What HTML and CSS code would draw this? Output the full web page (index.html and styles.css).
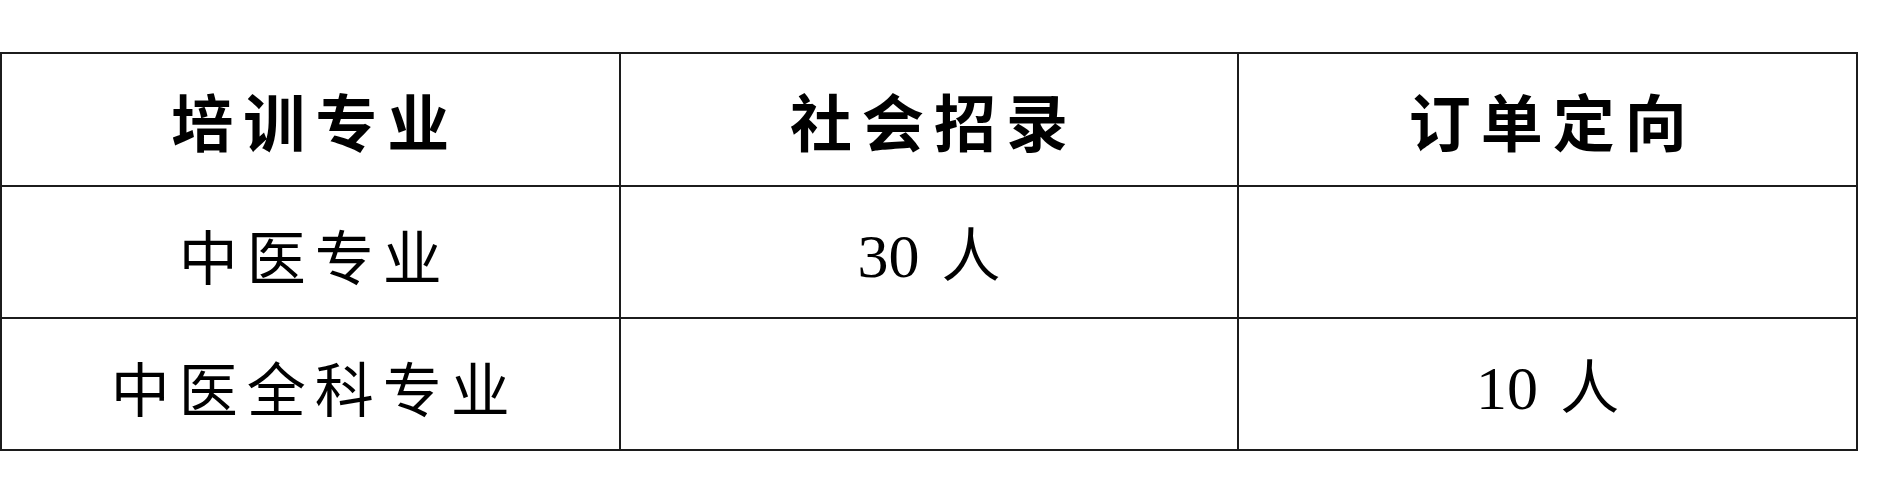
FILE: index.html
```html
<!DOCTYPE html>
<html lang="zh-CN">
<head>
<meta charset="utf-8">
<title>培训专业</title>
<link rel="stylesheet" href="styles.css">
</head>
<body>
<div class="page">
  <table class="plan">
    <colgroup><col class="c"><col class="c"><col class="c"></colgroup>
    <thead>
      <tr><th>培训专业</th><th>社会招录</th><th>订单定向</th></tr>
    </thead>
    <tbody>
      <tr><td>中医专业</td><td><span class="num">30</span> 人</td><td></td></tr>
      <tr><td>中医全科专业</td><td></td><td><span class="num">10</span> 人</td></tr>
    </tbody>
  </table>
</div>
</body>
</html>
```
FILE: styles.css
```css
html, body {
  margin: 0;
  padding: 0;
  background: #ffffff;
}
.page {
  padding-top: 52px;
  padding-left: 0;
}
.plan {
  border-collapse: collapse;
  table-layout: fixed;
  width: 1858px;
  color: #000;
  font-family: "Noto Sans CJK SC", "Noto Sans CJK JP", sans-serif;
}
.plan th,
.plan td {
  border: 2px solid #1c1c1c;
  height: 131px;
  padding: 0;
  text-align: center;
  vertical-align: middle;
  line-height: 1;
}
.plan th {
  font-size: 62px;
  font-weight: 700;
  letter-spacing: 10px;
  text-indent: 10px;
}
.plan td {
  height: 126px;
  font-size: 59px;
  font-weight: 400;
  letter-spacing: 9px;
  text-indent: 9px;
  padding-top: 4px;
}
.num {
  font-family: "Liberation Serif", "Times New Roman", serif;
  font-size: 62px;
  letter-spacing: 0;
}
```
